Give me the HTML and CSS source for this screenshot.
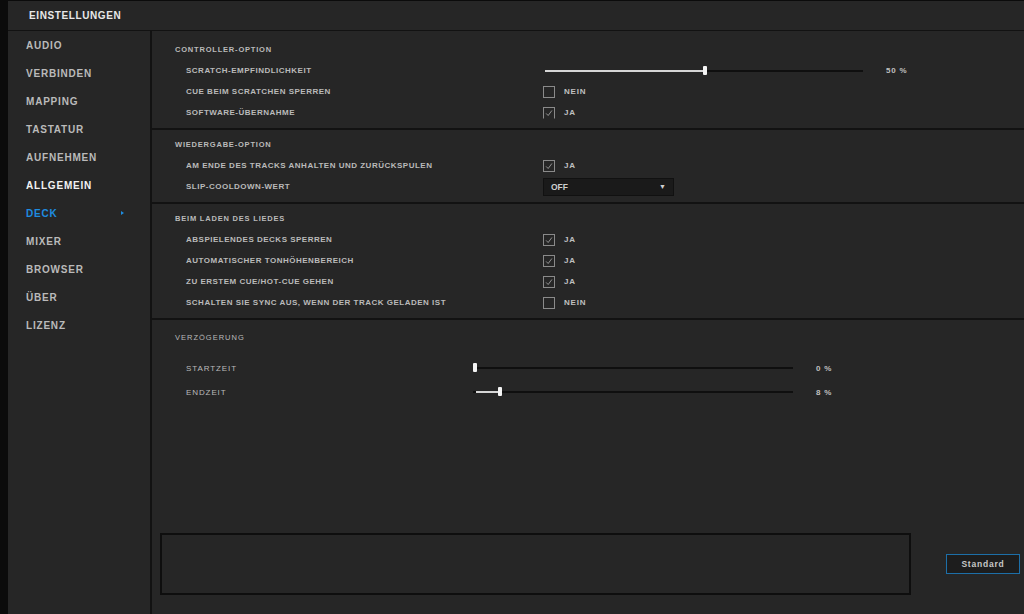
FILE: index.html
```html
<!DOCTYPE html>
<html lang="de">
  <head>
    <meta charset="UTF-8" />
    <title>Einstellungen</title>
    <link rel="stylesheet" href="styles.css">
  </head>
  <body>
    <div class="app">
      <header class="topbar">
        <h1>EINSTELLUNGEN</h1>
      </header>
      <div class="layout">
        <nav class="sidebar">
          <a class="nav-item">AUDIO</a>
          <a class="nav-item">VERBINDEN</a>
          <a class="nav-item">MAPPING</a>
          <a class="nav-item">TASTATUR</a>
          <a class="nav-item">AUFNEHMEN</a>
          <a class="nav-item parent">ALLGEMEIN</a>
          <a class="nav-item active">DECK
            <svg class="chev" width="3" height="4" viewBox="0 0 3 4"><path d="M0 0 L3 2 L0 4 Z" fill="#1e8ce0"/></svg>
          </a>
          <a class="nav-item">MIXER</a>
          <a class="nav-item">BROWSER</a>
          <a class="nav-item">ÜBER</a>
          <a class="nav-item">LIZENZ</a>
        </nav>

        <main class="content">
          <section class="group first">
            <h2>CONTROLLER-OPTION</h2>
            <div class="row">
              <span class="label">SCRATCH-EMPFINDLICHKEIT</span>
              <div class="slider">
                <div class="track">
                  <div class="fill" style="width: 160px"></div>
                  <div class="thumb" style="left: 158px"></div>
                </div>
                <span class="value">50 %</span>
              </div>
            </div>
            <div class="row">
              <span class="label">CUE BEIM SCRATCHEN SPERREN</span>
              <label class="check"><span class="box"></span>NEIN</label>
            </div>
            <div class="row">
              <span class="label">SOFTWARE-ÜBERNAHME</span>
              <label class="check"><span class="box on cut"><svg viewBox="0 0 12 12"><path d="M2.5 6.5 L5 9 L9.5 3" /></svg></span>JA</label>
            </div>
          </section>

          <section class="group">
            <h2>WIEDERGABE-OPTION</h2>
            <div class="row">
              <span class="label">AM ENDE DES TRACKS ANHALTEN UND ZURÜCKSPULEN</span>
              <label class="check"><span class="box on"><svg viewBox="0 0 12 12"><path d="M2.5 6.5 L5 9 L9.5 3" /></svg></span>JA</label>
            </div>
            <div class="row">
              <span class="label">SLIP-COOLDOWN-WERT</span>
              <div class="select">
                <span>OFF</span>
                <span class="arrow">▼</span>
              </div>
            </div>
          </section>

          <section class="group">
            <h2>BEIM LADEN DES LIEDES</h2>
            <div class="row">
              <span class="label">ABSPIELENDES DECKS SPERREN</span>
              <label class="check"><span class="box on"><svg viewBox="0 0 12 12"><path d="M2.5 6.5 L5 9 L9.5 3" /></svg></span>JA</label>
            </div>
            <div class="row">
              <span class="label">AUTOMATISCHER TONHÖHENBEREICH</span>
              <label class="check"><span class="box on"><svg viewBox="0 0 12 12"><path d="M2.5 6.5 L5 9 L9.5 3" /></svg></span>JA</label>
            </div>
            <div class="row">
              <span class="label">ZU ERSTEM CUE/HOT-CUE GEHEN</span>
              <label class="check"><span class="box on"><svg viewBox="0 0 12 12"><path d="M2.5 6.5 L5 9 L9.5 3" /></svg></span>JA</label>
            </div>
            <div class="row">
              <span class="label">SCHALTEN SIE SYNC AUS, WENN DER TRACK GELADEN IST</span>
              <label class="check"><span class="box"></span>NEIN</label>
            </div>
          </section>

          <section class="group delay">
            <h2>VERZÖGERUNG</h2>
            <div class="row">
              <span class="label">STARTZEIT</span>
              <div class="slider wide">
                <div class="track">
                  <div class="thumb" style="left: 0px"></div>
                </div>
                <span class="value">0 %</span>
              </div>
            </div>
            <div class="row">
              <span class="label">ENDZEIT</span>
              <div class="slider wide">
                <div class="track">
                  <div class="fill" style="width: 26px; margin-left: 3px"></div>
                  <div class="thumb" style="left: 25px"></div>
                </div>
                <span class="value">8 %</span>
              </div>
            </div>
          </section>

          <div class="footer">
            <div class="notes"></div>
            <button class="std">Standard</button>
          </div>
        </main>
      </div>
    </div>
  </body>
</html>
```

FILE: styles.css
```css
* {
  box-sizing: border-box;
  margin: 0;
  padding: 0;
}

body {
  background-color: #0b0b0b;
  font-family: "Liberation Sans", Arial, sans-serif;
  color: #c4c4c4;
  height: 614px;
  overflow: hidden;
}

.app {
  margin: 1px 0 0 8px;
  height: 613px;
  background-color: #262626;
  display: flex;
  flex-direction: column;
}

.topbar {
  height: 30px;
  border-bottom: 1px solid #121212;
  display: flex;
  align-items: center;
  padding-left: 21px;
}

.topbar h1 {
  font-size: 10px;
  font-weight: bold;
  letter-spacing: 0.6px;
  color: #e8e8e8;
}

.layout {
  flex: 1;
  display: flex;
}

/* left navigation */
.sidebar {
  width: 144px;
  border-right: 2px solid #121212;
  display: flex;
  flex-direction: column;
}

.nav-item {
  height: 28px;
  display: flex;
  align-items: center;
  padding-left: 18px;
  font-size: 10px;
  font-weight: bold;
  letter-spacing: 0.8px;
  color: #bababa;
}

.nav-item.parent {
  color: #f2f2f2;
}

.nav-item.active {
  color: #1e8ce0;
}

.chev {
  margin-left: 63px;
}

/* content */
.content {
  flex: 1;
  display: flex;
  flex-direction: column;
}

.group {
  padding: 4px 0 5px 23px;
  border-bottom: 2px solid #121212;
}

.group.first {
  padding-top: 8px;
}

.group h2 {
  height: 21px;
  display: flex;
  align-items: center;
  font-size: 7.5px;
  font-weight: bold;
  letter-spacing: 0.8px;
  color: #bababa;
}

.row {
  height: 21px;
  display: flex;
  align-items: center;
  padding-left: 11px;
}

.label {
  width: 357px;
  flex-shrink: 0;
  font-size: 8px;
  font-weight: bold;
  letter-spacing: 0.5px;
  color: #bababa;
}

.check {
  display: flex;
  align-items: center;
  font-size: 8px;
  font-weight: bold;
  letter-spacing: 0.8px;
  color: #c0c0c0;
}

.box {
  width: 12px;
  height: 12px;
  border: 1px solid #8a8a8a;
  margin-right: 9px;
  display: flex;
}

.box svg {
  width: 10px;
  height: 10px;
  fill: none;
  stroke: #a8a8a8;
  stroke-width: 1;
}

.box.cut {
  border-bottom-color: transparent;
}

.select {
  width: 131px;
  height: 18px;
  background-color: #1a1a1a;
  border: 1px solid #111;
  display: flex;
  align-items: center;
  justify-content: space-between;
  padding: 0 7px;
  font-size: 8.5px;
  font-weight: bold;
  color: #cfcfcf;
}

.select .arrow {
  font-size: 7px;
  color: #d0d0d0;
}

/* sliders */
.slider {
  display: flex;
  align-items: center;
  margin-left: 2px;
}

.track {
  position: relative;
  width: 318px;
  height: 2px;
  background-color: #0f0f0f;
}

.fill {
  height: 2px;
  background-color: #d6d6d6;
}

.thumb {
  position: absolute;
  top: -4px;
  width: 4px;
  height: 9px;
  background-color: #f4f4f4;
  border-radius: 1px;
}

.value {
  margin-left: 23px;
  font-size: 8px;
  font-weight: bold;
  letter-spacing: 0.8px;
  color: #c0c0c0;
}

.group.delay {
  border-bottom: none;
  padding-top: 7px;
}

.group.delay h2 {
  font-weight: normal;
  letter-spacing: 1px;
  margin-bottom: 8px;
}

.group.delay .row {
  height: 24px;
}

.group.delay .label {
  width: 287px;
  font-weight: normal;
  letter-spacing: 0.9px;
}

.slider.wide {
  margin-left: 0;
}

.slider.wide .track {
  width: 320px;
}

/* bottom bar */
.footer {
  margin-top: auto;
  display: flex;
  align-items: center;
  padding: 0 4px 19px 8px;
}

.notes {
  width: 751px;
  height: 62px;
  border: 2px solid #0e0e0e;
}

.std {
  margin-left: auto;
  width: 74px;
  height: 20px;
  background-color: #1d1d1d;
  border: 1px solid #1d6fa8;
  color: #c8c8c8;
  font-family: "Liberation Sans", Arial, sans-serif;
  font-size: 8.5px;
  font-weight: bold;
  letter-spacing: 0.8px;
}
```
